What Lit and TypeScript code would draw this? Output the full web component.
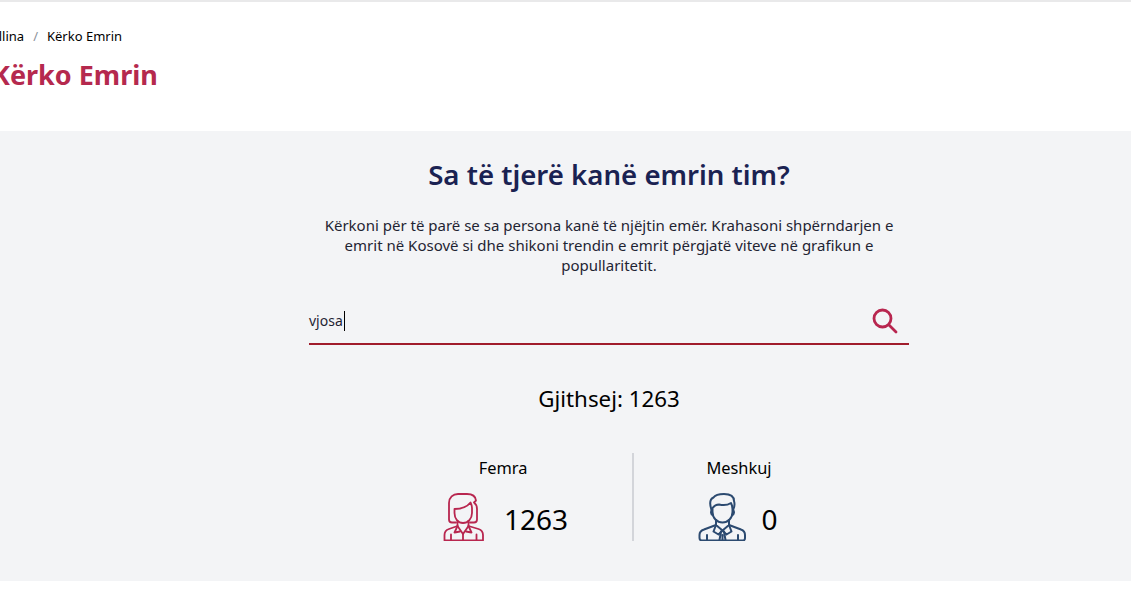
import { LitElement, css, html } from 'lit';
import { customElement } from 'lit/decorators.js';

const femaleIcon = html`<svg class="person" viewBox="0 0 42 48" width="42" height="48" fill="none" stroke="#b8264f" stroke-width="1.8" stroke-linejoin="round" stroke-linecap="round">
    <path d="M13 29.500H9C7 29.500 6 28.500 6 26.500V10C6 4.500 10 1 15 1H24C29 1 32.500 3 33 7.500L31 9.500C33 11 34 13 34 16V26.500C34 28.500 33 29.500 31 29.500H27"/>
    <path d="M11.500 16C17 16 24 14 27.500 9.500C28.500 11.500 29 13 29 15V20C29 25.500 25 30 20 30C15 30 11.500 25.500 11.500 20Z"/>
    <path d="M14.500 28V33L20 41L25.500 33V28"/>
    <path d="M14.500 33L6 36C3 37 1.500 39 1.500 42V47.500H40V42C40 39 38.500 37 35.500 36L25.500 33"/>
    <path d="M14.500 33L11.500 39.500L17 38.500M25.500 33L28.500 39.500L23 38.500M20 41V47.500M8 41.500V47.500M33.500 41.500V47.500"/>
</svg>`;

const maleIcon = html`<svg class="person" viewBox="0 0 48 48" width="48" height="48" fill="none" stroke="#2c4a70" stroke-width="2" stroke-linejoin="round" stroke-linecap="round">
    <path d="M13.500 17C11.500 11 12 6 15.500 4.500C17.500 1.500 22 1 26 1C32 1 36 3.500 36 8C37 11 36.500 14 35 17"/>
    <path d="M14.500 15C16 13 18 11.500 21 11.500C25 12.500 30 12 33 10C34 12 34.500 14 34.500 16V19C34.500 25 30 29.500 24.500 29.500C19 29.500 14.500 25 14.500 19Z"/>
    <path d="M14 17C12.500 18 12.500 21 15 22.500M35 17C36.500 18 36.500 21 34 22.500"/>
    <path d="M18 27V32L24.500 37.500L31 32V27"/>
    <path d="M18 32L6 36.500C3 37.500 1.500 39.500 1.500 42V45C1.500 46.500 2.500 47.500 4 47.500H45C46.500 47.500 47 46.500 47 45V42C47 39.500 46 37.500 43 36.500L31 32"/>
    <path d="M18 32L15.500 38.500L20.500 41.500L24.500 37.500L28.500 41.500L33.500 38.500L31 32"/>
    <path d="M23 38.500L21.500 47M26 38.500L27.500 47M24.500 42V47M9 42V47M40 42V47"/>
</svg>`;

@customElement('app-root')
export class AppRoot extends LitElement {
    static styles = css`
        :host {
            display: block;
            height: 600px;
            overflow: hidden;
            background: #fff;
            color: #000;
            font-family: 'Noto Sans', 'Open Sans', sans-serif;
        }

        .topbar {
            height: 2px;
            background: #e9e9ea;
        }

        .head {
            height: 129px;
            box-sizing: border-box;
            padding-top: 24px;
            margin-left: -17px;
        }

        .crumbs {
            display: flex;
            align-items: center;
            gap: 9px;
            height: 20px;
            font-size: 13px;
        }

        .crumbs .sep {
            color: #8d929b;
        }

        h1 {
            margin: 9px 0 0 9px;
            font-size: 27px;
            line-height: 40px;
            font-weight: 700;
            color: #b5294e;
        }

        .panel {
            height: 450px;
            box-sizing: border-box;
            padding: 21px 0 0 309px;
            background: #f3f4f6;
        }

        .column {
            width: 600px;
            text-align: center;
        }

        h2 {
            margin: 0;
            font-size: 27.6px;
            line-height: 44px;
            font-weight: 600;
            color: #1a2252;
        }

        .intro {
            width: 580px;
            margin: 19px auto 0;
            font-size: 15px;
            line-height: 20px;
            color: #1f2433;
        }

        .search {
            display: flex;
            align-items: center;
            justify-content: space-between;
            height: 45px;
            padding-top: 4px;
            margin-top: 19px;
            border-bottom: 2px solid #a01c2c;
            text-align: left;
            font-size: 14px;
            color: #1f2433;
        }

        .caret {
            display: inline-block;
            width: 1px;
            height: 20px;
            margin-left: 1px;
            background: #000;
            vertical-align: -5px;
        }

        .search svg {
            margin-right: 11px;
        }

        .total {
            margin-top: 38px;
            font-size: 22.300px;
            line-height: 32px;
        }

        .split {
            display: flex;
            margin: 38px 0 0 65px;
        }

        .side {
            width: 258px;
            height: 88px;
        }

        .side + .side {
            border-left: 2px solid #d3d5da;
            width: 210px;
        }

        .side .label {
            font-size: 16.400px;
            line-height: 30px;
        }

        .stat {
            display: flex;
            align-items: center;
            justify-content: center;
            gap: 19px;
            margin-top: 10px;
            padding-left: 5px;
            font-size: 28px;
            line-height: 50px;
        }

        .stat svg {
            margin-bottom: 3px;
        }

        .side + .side .stat {
            gap: 15px;
            padding-left: 0;
            padding-right: 2px;
        }
    `;

    render() {
        return html`
            <div class="topbar"></div>
            <header class="head">
                <div class="crumbs"><span>Ballina</span><span class="sep">/</span><span>Kërko Emrin</span></div>
                <h1>Kërko Emrin</h1>
            </header>
            <section class="panel">
                <div class="column">
                    <h2>Sa të tjerë kanë emrin tim?</h2>
                    <p class="intro">Kërkoni për të parë se sa persona kanë të njëjtin emër. Krahasoni shpërndarjen e emrit në Kosovë si dhe shikoni trendin e emrit përgjatë viteve në grafikun e popullaritetit.</p>
                    <div class="search">
                        <span>vjosa<span class="caret"></span></span>
                        <svg viewBox="0 0 26 26" width="26" height="26" fill="none" stroke="#b8264f" stroke-width="2.8" stroke-linecap="round">
                            <circle cx="10.500" cy="10.500" r="8.500"/>
                            <path d="M17 17L24 24"/>
                        </svg>
                    </div>
                    <div class="total">Gjithsej: 1263</div>
                    <div class="split">
                        <div class="side">
                            <div class="label">Femra</div>
                            <div class="stat">${femaleIcon}<span>1263</span></div>
                        </div>
                        <div class="side">
                            <div class="label">Meshkuj</div>
                            <div class="stat">${maleIcon}<span>0</span></div>
                        </div>
                    </div>
                </div>
            </section>
        `;
    }
}
